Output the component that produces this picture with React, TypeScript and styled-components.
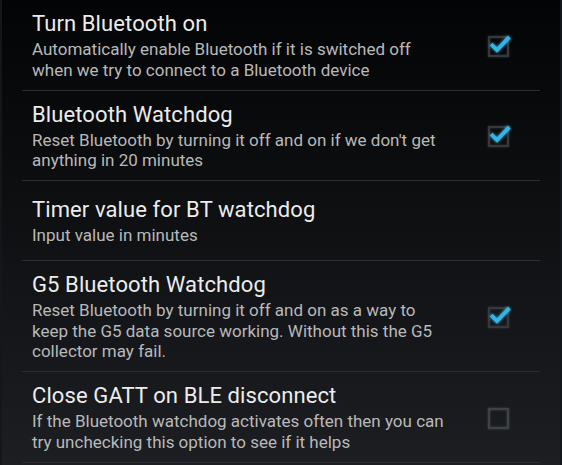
import React from "react";
import styled, { createGlobalStyle } from "styled-components";

const GlobalStyle = createGlobalStyle`
  html, body { margin: 0; padding: 0; background: #050607; }
  * { box-sizing: border-box; }
`;

const Screen = styled.div`
  width: 562px;
  height: 465px;
  overflow: hidden;
  background: linear-gradient(180deg, #030405 0%, #0c0e10 40%, #1c1e22 100%);
  border-left: 2px solid #13161b;
  border-right: 2px solid #13161b;
  padding: 0 20px;
  font-family: Roboto, "Noto Sans", sans-serif;
`;

const Row = styled.div<{ $minH?: number }>`
  display: flex;
  align-items: center;
  min-height: ${(p) => p.$minH ?? 80}px;
  border-bottom: 1px solid #2c2e31;
  padding: 11px 0 9.5px 10px;
`;

const TextCol = styled.div`
  flex: 1;
  min-width: 0;
  padding-right: 12px;
`;

const Title = styled.div`
  font-size: 22px;
  line-height: 26px;
  color: #ececec;
  letter-spacing: 0.1px;
`;

const Summary = styled.div`
  font-size: 17px;
  line-height: 20.5px;
  color: #b9b9b9;
  margin-top: 2px;
`;

const CheckSlot = styled.div`
  width: 58px;
  flex: none;
  display: flex;
  justify-content: flex-start;
`;

const Check: React.FC<{ checked: boolean }> = ({ checked }) => (
  <svg width="34" height="34" viewBox="0 0 34 34">
    <defs>
      <filter id="glow" x="-50%" y="-50%" width="200%" height="200%">
        <feGaussianBlur stdDeviation="1.5" result="b" />
        <feMerge>
          <feMergeNode in="b" />
          <feMergeNode in="SourceGraphic" />
        </feMerge>
      </filter>
      <filter id="boxglow" x="-50%" y="-50%" width="200%" height="200%">
        <feGaussianBlur stdDeviation="0.8" result="b" />
        <feMerge>
          <feMergeNode in="b" />
          <feMergeNode in="SourceGraphic" />
        </feMerge>
      </filter>
    </defs>
    <rect
      x="7"
      y="8"
      width="19"
      height="19"
      fill="none"
      stroke={checked ? "#34383c" : "#3e4245"}
      strokeWidth="2"
      filter="url(#boxglow)"
    />
    {checked && (
      <path
        d="M10.5 16.5 L15 21 L26 9.5"
        fill="none"
        stroke="#33b5e5"
        strokeWidth="3.8"
        strokeLinecap="square"
        strokeLinejoin="miter"
        filter="url(#glow)"
      />
    )}
  </svg>
);

type Pref = { title: string; summary: string[]; checked?: boolean };

const prefs: Pref[] = [
  {
    title: "Turn Bluetooth on",
    summary: [
      "Automatically enable Bluetooth if it is switched off",
      "when we try to connect to a Bluetooth device",
    ],
    checked: true,
  },
  {
    title: "Bluetooth Watchdog",
    summary: [
      "Reset Bluetooth by turning it off and on if we don't get",
      "anything in 20 minutes",
    ],
    checked: true,
  },
  {
    title: "Timer value for BT watchdog",
    summary: ["Input value in minutes"],
  },
  {
    title: "G5 Bluetooth Watchdog",
    summary: [
      "Reset Bluetooth by turning it off and on as a way to",
      "keep the G5 data source working. Without this the G5",
      "collector may fail.",
    ],
    checked: true,
  },
  {
    title: "Close GATT on BLE disconnect",
    summary: [
      "If the Bluetooth watchdog activates often then you can",
      "try unchecking this option to see if it helps",
    ],
    checked: false,
  },
];

export default function App() {
  return (
    <>
      <GlobalStyle />
      <Screen>
        {prefs.map((p) => (
          <Row key={p.title} $minH={p.summary.length === 1 ? 80 : 90}>
            <TextCol>
              <Title>{p.title}</Title>
              <Summary>
                {p.summary.map((l) => (
                  <div key={l}>{l}</div>
                ))}
              </Summary>
            </TextCol>
            {p.checked !== undefined && (
              <CheckSlot>
                <Check checked={p.checked} />
              </CheckSlot>
            )}
          </Row>
        ))}
      </Screen>
    </>
  );
}
